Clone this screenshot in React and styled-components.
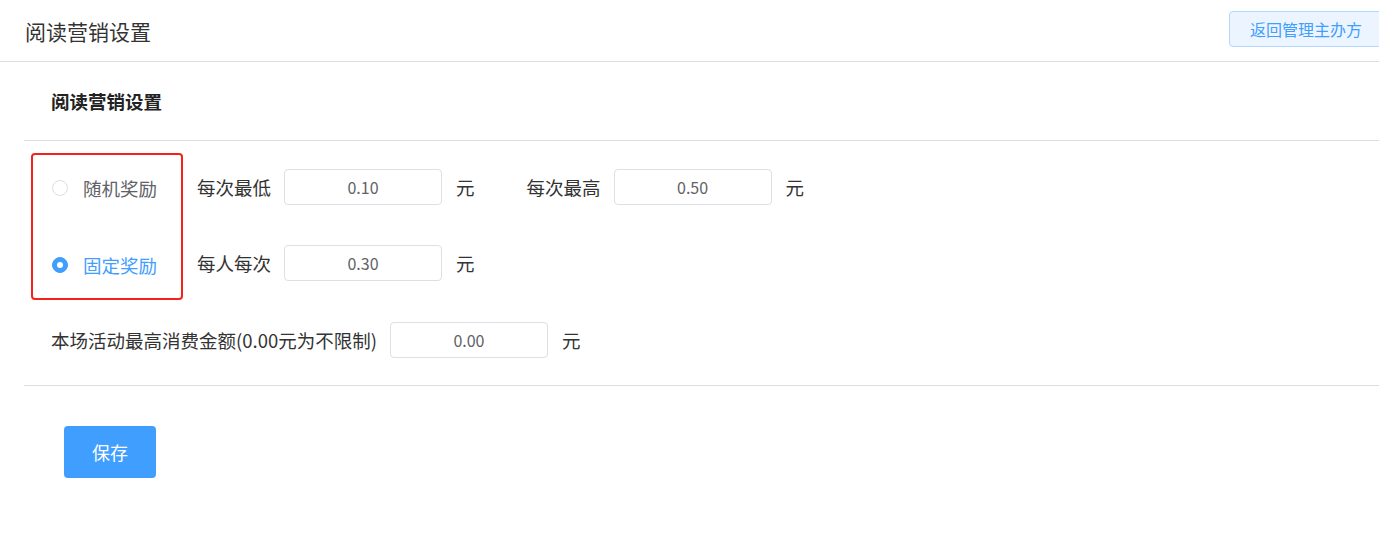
import React from 'react';
import styled, { createGlobalStyle } from 'styled-components';

const colors = {
    text: '#303133',
    regular: '#606266',
    border: '#dcdfe6',
    line: '#dddddd',
    primary: '#409eff',
    danger: '#f5221b',
};

const GlobalStyle = createGlobalStyle`
    html, body {
        margin: 0;
        padding: 0;
        background: #fff;
        overflow: hidden;
    }
    body {
        font-family: "Noto Sans CJK SC", "Noto Sans", "Liberation Sans", sans-serif;
        color: ${colors.text};
    }
`

const Page = styled('div')`
    width: 1379px;
    height: 547px;
    overflow: hidden;
`

const Header = styled('header')`
    display: flex;
    justify-content: space-between;
    align-items: center;
    height: 61px;
    padding-left: 25px;
    border-bottom: 1px solid ${colors.line};
`

const Title = styled('h1')`
    margin: 0;
    font-size: 21px;
    font-weight: normal;
    color: #333;
`

const BackButton = styled('button')`
    flex-shrink: 0;
    height: 36px;
    margin-top: -4px;
    margin-right: -4px;
    padding: 0 20px;
    font-family: inherit;
    font-size: 16px;
    color: ${colors.primary};
    background: #ecf5ff;
    border: 1px solid #b3d8ff;
    border-radius: 4px;
`

const Content = styled('main')`
    padding-left: 24px;
`

const SectionTitle = styled('h2')`
    margin: 0;
    height: 78px;
    line-height: 78px;
    padding-left: 27px;
    font-size: 18.5px;
    font-weight: bold;
    color: #222;
    border-bottom: 1px solid ${colors.line};
`

const Form = styled('div')`
    padding: 12px 0 27px;
    border-bottom: 1px solid ${colors.line};
`

const RewardRow = styled('div')`
    display: flex;
    align-items: flex-start;
    gap: 14px;
    padding-left: 7px;
`

const RewardBox = styled('div')`
    display: flex;
    flex-direction: column;
    gap: 40px;
    width: 148px;
    padding: 14px 0 15px;
    border: 2px solid ${colors.danger};
    border-radius: 4px;
    box-sizing: content-box;
`

const RadioOption = styled('label')`
    display: flex;
    align-items: center;
    gap: 15px;
    height: 37px;
    padding-left: 19px;
    font-size: 18.5px;
    color: ${p => p.checked ? colors.primary : colors.regular};
`

const RadioDot = styled('span')`
    position: relative;
    width: 16px;
    height: 16px;
    box-sizing: border-box;
    border-radius: 50%;
    border: 1px solid ${p => p.checked ? colors.primary : colors.border};
    background: ${p => p.checked ? colors.primary : '#fff'};

    &::after {
        content: '';
        display: ${p => p.checked ? 'block' : 'none'};
        position: absolute;
        left: 50%;
        top: 50%;
        width: 6px;
        height: 6px;
        border-radius: 50%;
        background: #fff;
        transform: translate(-50%, -50%);
    }
`

const Fields = styled('div')`
    display: flex;
    flex-direction: column;
    gap: 40px;
    padding-top: 16px;
`

const FieldRow = styled('div')`
    display: flex;
    align-items: center;
    padding-left: ${p => p.indent || 0}px;
    margin-top: ${p => p.top || 0}px;
`

const Field = styled('div')`
    display: flex;
    align-items: center;
    gap: 13px;
    margin-right: 52px;
`

const Label = styled('span')`
    font-size: 18.5px;
    color: #333;
    white-space: nowrap;
`

const Input = styled('input')`
    width: 158px;
    height: 36px;
    box-sizing: border-box;
    border: 1px solid ${colors.border};
    border-radius: 4px;
    font-family: inherit;
    font-size: 16px;
    color: ${colors.regular};
    text-align: center;
    outline: none;
`

const Unit = styled('span')`
    margin-left: 1px;
    font-size: 18.5px;
    color: #333;
`

const Footer = styled('div')`
    padding: 40px 0 0 40px;
`

const SaveButton = styled('button')`
    width: 92px;
    height: 52px;
    border: none;
    border-radius: 4px;
    background: ${colors.primary};
    color: #fff;
    font-family: inherit;
    font-size: 18px;
`

const MoneyField = ({ label, value }) => (
    <Field>
        <Label>{label}</Label>
        <Input defaultValue={value} />
        <Unit>元</Unit>
    </Field>
)

const App = () => (
    <Page>
        <GlobalStyle />
        <Header>
            <Title>阅读营销设置</Title>
            <BackButton>返回管理主办方</BackButton>
        </Header>
        <Content>
            <SectionTitle>阅读营销设置</SectionTitle>
            <Form>
                <RewardRow>
                    <RewardBox>
                        <RadioOption>
                            <RadioDot />
                            随机奖励
                        </RadioOption>
                        <RadioOption checked>
                            <RadioDot checked />
                            固定奖励
                        </RadioOption>
                    </RewardBox>
                    <Fields>
                        <FieldRow>
                            <MoneyField label='每次最低' value='0.10' />
                            <MoneyField label='每次最高' value='0.50' />
                        </FieldRow>
                        <FieldRow>
                            <MoneyField label='每人每次' value='0.30' />
                        </FieldRow>
                    </Fields>
                </RewardRow>
                <FieldRow indent={27} top={22}>
                    <MoneyField label='本场活动最高消费金额(0.00元为不限制)' value='0.00' />
                </FieldRow>
            </Form>
            <Footer>
                <SaveButton>保存</SaveButton>
            </Footer>
        </Content>
    </Page>
)

export default App;
